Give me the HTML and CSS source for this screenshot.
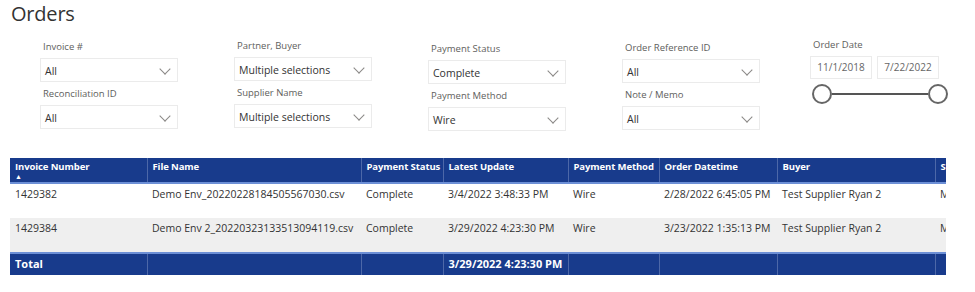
FILE: index.html
```html
<!DOCTYPE html>
<html lang="en">
<head>
  <meta charset="UTF-8">
  <meta name="viewport" content="width=device-width, initial-scale=1.0">
  <title>Orders</title>
  <link rel="stylesheet" href="styles.css">
</head>
<body>
  <div class="page">
    <h1 class="title">Orders</h1>

    <div class="filters">
      <div class="filter-col col-1">
        <div class="slicer">
          <div class="slicer-label">Invoice #</div>
          <div class="dropdown"><span>All</span><i class="chev"></i></div>
        </div>
        <div class="slicer">
          <div class="slicer-label">Reconciliation ID</div>
          <div class="dropdown"><span>All</span><i class="chev"></i></div>
        </div>
      </div>
      <div class="filter-col col-2">
        <div class="slicer">
          <div class="slicer-label">Partner, Buyer</div>
          <div class="dropdown"><span>Multiple selections</span><i class="chev"></i></div>
        </div>
        <div class="slicer">
          <div class="slicer-label">Supplier Name</div>
          <div class="dropdown"><span>Multiple selections</span><i class="chev"></i></div>
        </div>
      </div>
      <div class="filter-col col-3">
        <div class="slicer">
          <div class="slicer-label">Payment Status</div>
          <div class="dropdown"><span>Complete</span><i class="chev"></i></div>
        </div>
        <div class="slicer">
          <div class="slicer-label">Payment Method</div>
          <div class="dropdown"><span>Wire</span><i class="chev"></i></div>
        </div>
      </div>
      <div class="filter-col col-4">
        <div class="slicer">
          <div class="slicer-label">Order Reference ID</div>
          <div class="dropdown"><span>All</span><i class="chev"></i></div>
        </div>
        <div class="slicer">
          <div class="slicer-label">Note / Memo</div>
          <div class="dropdown"><span>All</span><i class="chev"></i></div>
        </div>
      </div>
      <div class="filter-col col-5">
        <div class="slicer-label">Order Date</div>
        <div class="date-boxes">
          <div class="date-box">11/1/2018</div>
          <div class="date-box">7/22/2022</div>
        </div>
        <div class="range">
          <span class="knob"></span>
          <span class="track"></span>
          <span class="knob"></span>
        </div>
      </div>
    </div>

    <div class="table-wrap">
      <table class="grid">
        <colgroup>
          <col style="width:137px">
          <col style="width:214px">
          <col style="width:82px">
          <col style="width:125px">
          <col style="width:91px">
          <col style="width:118px">
          <col style="width:158px">
          <col style="width:120px">
        </colgroup>
        <thead>
          <tr>
            <th>Invoice Number<span class="sort">&#9650;</span></th>
            <th>File Name</th>
            <th>Payment Status</th>
            <th>Latest Update</th>
            <th>Payment Method</th>
            <th>Order Datetime</th>
            <th>Buyer</th>
            <th>Supplier</th>
          </tr>
        </thead>
        <tbody>
          <tr>
            <td>1429382</td>
            <td>Demo Env_20220228184505567030.csv</td>
            <td>Complete</td>
            <td>3/4/2022 3:48:33 PM</td>
            <td>Wire</td>
            <td>2/28/2022 6:45:05 PM</td>
            <td>Test Supplier Ryan 2</td>
            <td>Multiple</td>
          </tr>
          <tr class="alt">
            <td>1429384</td>
            <td>Demo Env 2_20220323133513094119.csv</td>
            <td>Complete</td>
            <td>3/29/2022 4:23:30 PM</td>
            <td>Wire</td>
            <td>3/23/2022 1:35:13 PM</td>
            <td>Test Supplier Ryan 2</td>
            <td>Multiple</td>
          </tr>
        </tbody>
        <tfoot>
          <tr>
            <td>Total</td>
            <td></td>
            <td></td>
            <td>3/29/2022 4:23:30 PM</td>
            <td></td>
            <td></td>
            <td></td>
            <td></td>
          </tr>
        </tfoot>
      </table>
    </div>
  </div>
</body>
</html>
```

FILE: styles.css
```css
body {
  margin: 0;
  font-family: 'Open Sans', 'Noto Sans', Arial, sans-serif;
  color: #333;
  background: #fff;
}

.page {
  width: 975px;
  height: 292px;
  overflow: hidden;
}

.title {
  margin: 0;
  padding: 0 0 0 11px;
  font-size: 20px;
  font-weight: 400;
  line-height: 28px;
  color: #333;
  letter-spacing: -0.2px;
}

/* 筛选区 */
.filters {
  display: flex;
  padding-left: 40px;
  height: 130px;
}

.filter-col {
  width: 138px;
  margin-right: 56px;
  display: flex;
  flex-direction: column;
}

.col-1 { padding-top: 12px; }
.col-2 { padding-top: 11px; }
.col-3 { padding-top: 14px; }
.col-4 { padding-top: 13px; margin-right: 50px; }
.col-5 { padding-top: 10px; width: 140px; margin-right: 0; }

.slicer {
  height: 47px;
}

.slicer-label {
  font-size: 9.5px;
  color: #605e5c;
  line-height: 14px;
  padding-left: 3px;
  margin-bottom: 4px;
}

.dropdown {
  box-sizing: border-box;
  height: 24px;
  border: 1px solid #ebebeb;
  display: flex;
  align-items: center;
  justify-content: space-between;
  padding: 2px 6px 0 4px;
  font-size: 10.5px;
  color: #333;
}

.chev {
  width: 7px;
  height: 7px;
  border-right: 1px solid #8a8886;
  border-bottom: 1px solid #8a8886;
  transform: rotate(45deg);
  margin-top: -5px;
  margin-right: 2px;
}

.date-boxes {
  display: flex;
  gap: 5px;
}

.date-box {
  box-sizing: border-box;
  width: 62px;
  height: 23px;
  border: 1px solid #ebebeb;
  font-size: 10px;
  color: #666;
  line-height: 21px;
  text-align: center;
}

.range {
  display: flex;
  align-items: center;
  margin-top: 5px;
  margin-left: 2px;
  width: 136px;
}

.knob {
  box-sizing: border-box;
  width: 20px;
  height: 20px;
  border: 2px solid #666;
  border-radius: 50%;
  background: #fff;
  flex: none;
}

.track {
  flex: 1;
  height: 2px;
  background: #555;
}

/* 表格 */
.table-wrap {
  margin-left: 10px;
  width: 936px;
  overflow: hidden;
}

.grid {
  border-collapse: collapse;
  table-layout: fixed;
  width: 1045px;
  font-size: 10.5px;
}

.grid th,
.grid td {
  text-align: left;
  vertical-align: top;
  white-space: nowrap;
  overflow: hidden;
  padding: 3px 4px 0 5px;
}

.grid thead th {
  background: #183b8c;
  color: #fff;
  font-size: 9.5px;
  font-weight: 700;
  letter-spacing: -0.1px;
  height: 25px;
  box-sizing: border-box;
  border-left: 1px solid #4d68a8;
  border-bottom: 2px solid #6c8fd6;
  line-height: 12px;
  padding-top: 3px;
}

.grid thead th:first-child {
  border-left: none;
}

.sort {
  display: block;
  font-size: 7px;
  line-height: 7px;
}

.grid tbody td {
  height: 35px;
  box-sizing: border-box;
  padding-top: 3px;
  color: #333;
}

.grid tbody tr.alt td {
  background: #efefef;
}

.grid tfoot td {
  background: #183b8c;
  color: #fff;
  font-size: 11px;
  font-weight: 700;
  height: 22px;
  box-sizing: border-box;
  padding-top: 2px;
  border-left: 1px solid #4d68a8;
  border-top: 2px solid #6c8fd6;
}

.grid tfoot td:first-child {
  border-left: none;
}
```
